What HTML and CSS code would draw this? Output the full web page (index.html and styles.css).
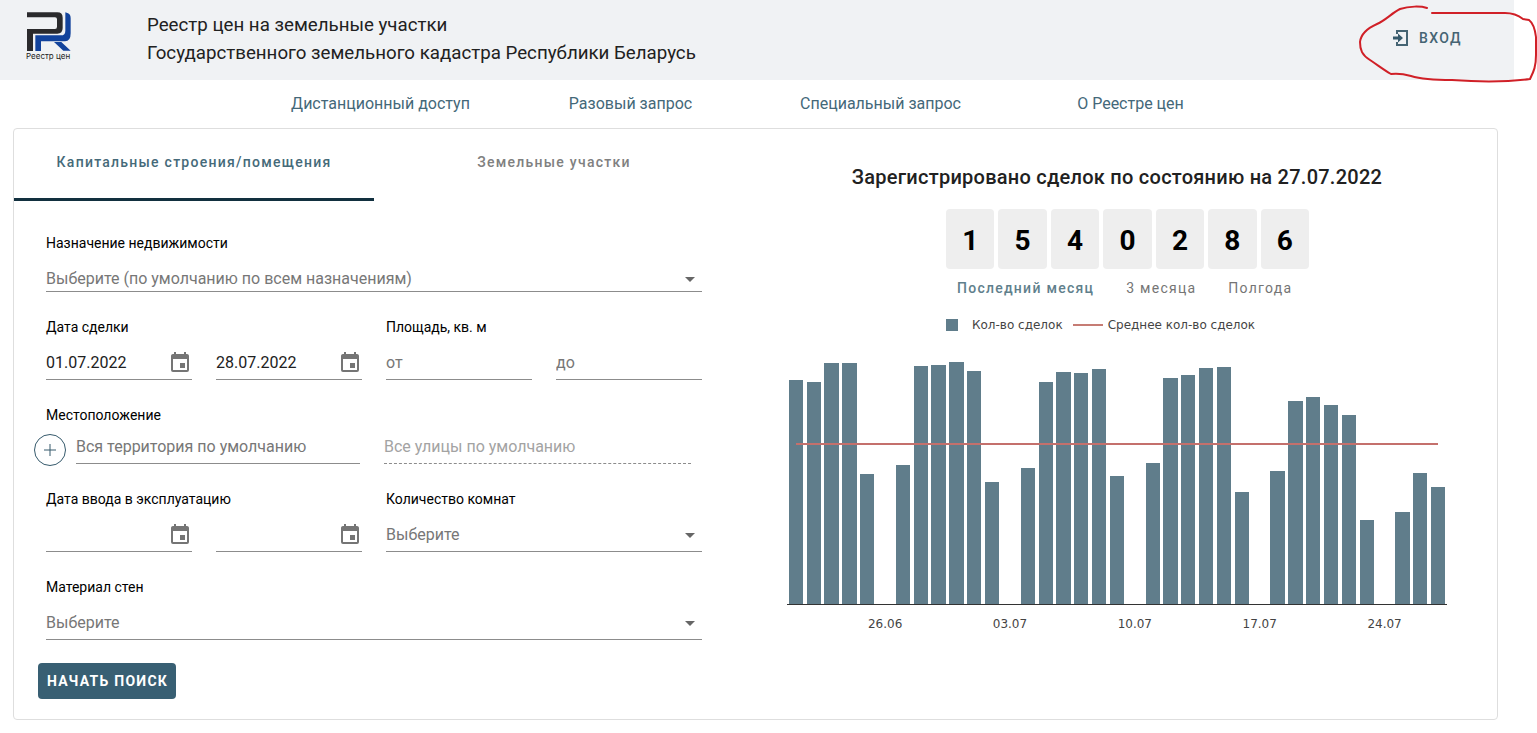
FILE: index.html
```
<!DOCTYPE html>
<html lang="ru">
<head>
<meta charset="utf-8">
<title>Реестр цен</title>
<link rel="stylesheet" href="styles.css">
</head>
<body>
<header class="header">
  <a class="logo" href="#">
    <svg class="logo-mark" viewBox="78 33 138 123" aria-hidden="true">
      <path fill="#2a2a2c" d="M81 37H172Q188 37 188 53V84Q188 101 172 101H99V153H81V87H165Q171 87 171 80V58Q171 52 165 52H81Z"/>
      <path fill="#12439c" d="M196 37L204 40Q212 43 212 55V100Q212 124 195 124H123V153H106V106H183Q196 106 196 92ZM162 126H184L212 152H190Z"/>
    </svg>
    <span class="logo-text">Реестр цен</span>
  </a>
  <h3 class="title">Реестр цен на земельные участки<br>Государственного земельного кадастра Республики Беларусь</h3>
  <button class="login" type="button">
    <svg class="login-icon" viewBox="0 0 16 18" aria-hidden="true">
      <path fill="none" stroke="#456473" stroke-width="2" d="M4 5V2H14V16H4V13"/>
      <path fill="#365a6c" d="M0 7.500H5V4.500L10 9L5 13.500V10.500H0Z"/>
    </svg>
    ВХОД
  </button>
</header>
<nav class="nav">
  <a href="#">Дистанционный доступ</a>
  <a href="#">Разовый запрос</a>
  <a href="#">Специальный запрос</a>
  <a href="#">О Реестре цен</a>
</nav>
<main class="card">
  <section class="search">
    <div class="tabs">
      <button class="tab tab-active" type="button">Капитальные строения/помещения</button>
      <button class="tab" type="button">Земельные участки</button>
    </div>
    <form class="form">
      <div class="group group-wide">
        <label class="label" for="purpose">Назначение недвижимости</label>
        <div class="field field-select field-short">
          <select id="purpose"><option>Выберите (по умолчанию по всем назначениям)</option></select>
          <svg class="arrow" viewBox="0 0 24 24" aria-hidden="true"><path d="M7 10L12 15L17 10Z"/></svg>
        </div>
      </div>
      <div class="group">
        <label class="label" for="deal-from">Дата сделки</label>
        <div class="pair">
          <div class="field">
            <input id="deal-from" type="text" value="01.07.2022">
            <button class="calendar" type="button" aria-label="Дата с"><svg viewBox="0 0 24 24"><path d="M19,19H5V8H19M16,1V3H8V1H6V3H5C3.89,3 3,3.89 3,5V19A2,2 0 0,0 5,21H19A2,2 0 0,0 21,19V5C21,3.89 20.1,3 19,3H18V1M17,12H12V17H17V12Z"/></svg></button>
          </div>
          <div class="field">
            <input type="text" value="28.07.2022" aria-label="Дата сделки по">
            <button class="calendar" type="button" aria-label="Дата по"><svg viewBox="0 0 24 24"><path d="M19,19H5V8H19M16,1V3H8V1H6V3H5C3.89,3 3,3.89 3,5V19A2,2 0 0,0 5,21H19A2,2 0 0,0 21,19V5C21,3.89 20.1,3 19,3H18V1M17,12H12V17H17V12Z"/></svg></button>
          </div>
        </div>
      </div>
      <div class="group">
        <label class="label" for="area-from">Площадь, кв. м</label>
        <div class="pair">
          <div class="field"><input id="area-from" type="text" placeholder="от"></div>
          <div class="field"><input type="text" placeholder="до" aria-label="Площадь до"></div>
        </div>
      </div>
      <div class="group group-wide group-tight">
        <label class="label" for="place">Местоположение</label>
        <div class="location">
          <button class="add" type="button" aria-label="Добавить"><svg viewBox="0 0 12 12"><path d="M6 0V12M0 6H12"/></svg></button>
          <div class="field field-place"><input id="place" type="text" placeholder="Вся территория по умолчанию"></div>
          <div class="field field-street"><input type="text" placeholder="Все улицы по умолчанию" aria-label="Улица" disabled></div>
        </div>
      </div>
      <div class="group">
        <label class="label" for="built-from">Дата ввода в эксплуатацию</label>
        <div class="pair">
          <div class="field">
            <input id="built-from" type="text">
            <button class="calendar" type="button" aria-label="Ввод с"><svg viewBox="0 0 24 24"><path d="M19,19H5V8H19M16,1V3H8V1H6V3H5C3.89,3 3,3.89 3,5V19A2,2 0 0,0 5,21H19A2,2 0 0,0 21,19V5C21,3.89 20.1,3 19,3H18V1M17,12H12V17H17V12Z"/></svg></button>
          </div>
          <div class="field">
            <input type="text" aria-label="Дата ввода по">
            <button class="calendar" type="button" aria-label="Ввод по"><svg viewBox="0 0 24 24"><path d="M19,19H5V8H19M16,1V3H8V1H6V3H5C3.89,3 3,3.89 3,5V19A2,2 0 0,0 5,21H19A2,2 0 0,0 21,19V5C21,3.89 20.1,3 19,3H18V1M17,12H12V17H17V12Z"/></svg></button>
          </div>
        </div>
      </div>
      <div class="group">
        <label class="label" for="rooms">Количество комнат</label>
        <div class="field field-select">
          <select id="rooms"><option>Выберите</option></select>
          <svg class="arrow" viewBox="0 0 24 24" aria-hidden="true"><path d="M7 10L12 15L17 10Z"/></svg>
        </div>
      </div>
      <div class="group group-wide">
        <label class="label" for="walls">Материал стен</label>
        <div class="field field-select">
          <select id="walls"><option>Выберите</option></select>
          <svg class="arrow" viewBox="0 0 24 24" aria-hidden="true"><path d="M7 10L12 15L17 10Z"/></svg>
        </div>
      </div>
      <button class="submit" type="button">НАЧАТЬ ПОИСК</button>
    </form>
  </section>
  <section class="stats">
    <h2 class="stats-title">Зарегистрировано сделок по состоянию на 27.07.2022</h2>
    <div class="summary">
      <div class="counter"><span>1</span><span>5</span><span>4</span><span>0</span><span>2</span><span>8</span><span>6</span></div>
      <div class="periods">
        <button class="period period-active" type="button">Последний месяц</button>
        <button class="period" type="button">3 месяца</button>
        <button class="period" type="button">Полгода</button>
      </div>
      <div class="legend">
        <span class="key-bar"></span><span>Кол-во сделок</span>
        <span class="key-line"></span><span>Среднее кол-во сделок</span>
      </div>
    </div>
    <div class="chart">
      <div class="plot">
        <i style="height:224px"></i><i style="height:222px"></i><i style="height:241px"></i><i style="height:241px"></i><i style="height:130px"></i><i style="height:0px"></i><i style="height:139px"></i>
        <i style="height:238px"></i><i style="height:239px"></i><i style="height:242px"></i><i style="height:233px"></i><i style="height:122px"></i><i style="height:0px"></i><i style="height:136px"></i>
        <i style="height:222px"></i><i style="height:232px"></i><i style="height:231px"></i><i style="height:235px"></i><i style="height:128px"></i><i style="height:0px"></i><i style="height:141px"></i>
        <i style="height:226px"></i><i style="height:229px"></i><i style="height:236px"></i><i style="height:237px"></i><i style="height:112px"></i><i style="height:0px"></i><i style="height:133px"></i>
        <i style="height:203px"></i><i style="height:207px"></i><i style="height:199px"></i><i style="height:189px"></i><i style="height:84px"></i><i style="height:0px"></i><i style="height:92px"></i>
        <i style="height:131px"></i><i style="height:117px"></i>
        <div class="average"></div>
      </div>
      <div class="dates"><span>26.06</span><span>03.07</span><span>10.07</span><span>17.07</span><span>24.07</span></div>
    </div>
  </section>
</main>
<svg class="marker" viewBox="1357 0 180 86" aria-hidden="true">
  <path d="M1427 8C1421 6 1409 6 1400 9C1392 13 1386 20 1377 24C1368 28 1361 33 1360 42C1360 50 1362 55 1370 60C1379 66 1384 70 1391 74C1398 73 1404 74 1411 76C1424 80 1440 80 1452 80C1480 82 1507 82 1530 79C1534 71 1536 66 1536 55V37C1535 29 1533 23 1529 20L1523 19C1518 15 1512 13 1505 13H1432"/>
</svg>
</body>
</html>
```

FILE: styles.css
```
* { box-sizing: border-box; }

body {
  margin: 0;
  padding-right: 23px;
  background: #fff;
  color: #212121;
  font: 16px/24px Roboto, "Noto Sans", sans-serif;
  position: relative;
  overflow-x: hidden;
}

button, input, select { font: inherit; color: inherit; margin: 0; }
button { padding: 0; border: 0; background: none; cursor: pointer; }
a { color: inherit; text-decoration: none; }

.header {
  display: flex;
  align-items: flex-start;
  min-height: 80px;
  padding: 11px 52px 0 26px;
  background: #f0f2f4;
}
.logo { display: flex; flex-direction: column; width: 46px; margin-right: 75px; }
.logo-mark { width: 46px; height: 41px; }
.logo-text { font: 8px/8px Inter, sans-serif; color: #222; white-space: nowrap; }
.title { flex: 1; margin: 0; line-height: 28px; font-weight: 400; }
.login {
  display: flex;
  align-items: center;
  gap: 10px;
  margin-top: 17px;
  font-size: 14px;
  line-height: 20px;
  font-weight: 500;
  letter-spacing: 0.1em;
  color: #456473;
}
.login-icon { width: 16px; height: 18px; }

.nav {
  display: grid;
  grid-template-columns: repeat(4, 250px);
  justify-content: center;
  padding: 12px 3px 12px 0;
  text-align: center;
  color: #446879;
}

.card {
  display: grid;
  grid-template-columns: minmax(0, 720fr) minmax(0, 763fr);
  margin: 0 16px 0 13px;
  border: 1px solid #dedede;
  border-radius: 4px;
}

.tabs { display: grid; grid-template-columns: 1fr 1fr; height: 72px; }
.tab {
  padding-bottom: 3px;
  border-bottom: 3px solid transparent;
  font-size: 14px;
  font-weight: 500;
  letter-spacing: 0.09em;
  color: #808080;
}
.tab-active { border-color: #12303f; color: #456a79; }

.form {
  display: grid;
  grid-template-columns: 1fr 1fr;
  gap: 25px 24px;
  padding: 32px 32px 20px;
}
.group { display: flex; flex-direction: column; gap: 10px; min-width: 0; }
.group-wide { grid-column: 1 / -1; }
.group-tight { gap: 6px; }
.label { font-size: 14px; line-height: 20px; color: #000; }
.pair { display: grid; grid-template-columns: 1fr 1fr; gap: 24px; }
.field {
  display: flex;
  align-items: center;
  height: 33px;
  min-width: 0;
  border-bottom: 1px solid #8c8c8c;
}
.field input, .field select {
  flex: 1;
  width: 100%;
  min-width: 0;
  height: 24px;
  padding: 0;
  border: 0;
  background: none;
  outline: 0;
}
.field input::placeholder { color: #777; opacity: 1; }
.field-select { display: grid; align-items: center; }
.field-short { align-items: end; height: 27px; margin-top: 2px; }
.field select { grid-area: 1 / 1; appearance: none; color: #777; }
.arrow { grid-area: 1 / 1; justify-self: end; width: 24px; height: 24px; fill: #666; pointer-events: none; }
.calendar { width: 24px; height: 24px; }
.calendar svg { display: block; fill: #757575; }
.location { display: flex; align-items: flex-start; padding-right: 11px; }
.add {
  display: grid;
  place-items: center;
  width: 32px;
  height: 32px;
  margin: 3px 10px -2px -12px;
  border: 1px solid #365a6c;
  border-radius: 50%;
}
.add svg { width: 12px; height: 12px; fill: none; stroke: #365a6c; }
.field-place { flex: 284; margin-right: 24px; }
.field-street { flex: 307; border-bottom-style: dashed; }
.field-street input::placeholder { color: #a3a3a3; }
.submit {
  justify-self: start;
  height: 36px;
  margin: -2px 0 0 -8px;
  padding: 0 8px 0 9px;
  border-radius: 4px;
  background: #385f73;
  color: #fff;
  font-size: 14px;
  font-weight: 700;
  letter-spacing: 0.09em;
}

.stats { display: flex; flex-direction: column; align-items: center; padding: 36px 50px 0 53px; }
.stats-title { margin: 0 0 20px; font-size: 20px; line-height: 24px; font-weight: 500; letter-spacing: 0.0125em; }
.summary { width: 363px; margin-left: 21px; }
.counter { display: grid; grid-template-columns: repeat(7, 1fr); gap: 4px; }
.counter span {
  padding-top: 4px;
  border-radius: 4px;
  background: #eee;
  color: #000;
  font: 700 28px/56px Roboto, sans-serif;
  text-align: center;
}
.periods { display: flex; gap: 32px; padding: 9px 11px 18px; }
.period { font-size: 14px; line-height: 20px; letter-spacing: 0.09em; color: #757575; white-space: nowrap; }
.period-active { font-weight: 500; color: #5f7f8c; }
.legend {
  display: flex;
  align-items: center;
  font: 12px/18px "DejaVu Sans", sans-serif;
  color: #444;
  white-space: nowrap;
}
.key-bar { width: 12px; height: 12px; margin-right: 14px; background: #607d8b; }
.key-line { width: 30px; height: 2px; margin: 0 5px 0 10px; background: #c67c74; }

.chart { align-self: stretch; margin-top: 26px; }
.plot {
  position: relative;
  display: grid;
  grid-template-columns: repeat(37, 1fr);
  align-items: end;
  height: 245px;
  border-bottom: 1px solid #333;
}
.plot i { margin: 0 10%; background: #607d8b; }
.average { position: absolute; left: 9px; right: 9px; bottom: 159px; height: 2px; background: #c4706c; }
.dates {
  display: grid;
  grid-template-columns: 2fr repeat(5, 7fr);
  margin-top: 10px;
  font: 12px/18px "DejaVu Sans", sans-serif;
  color: #444;
  text-align: center;
}
.dates span:first-child { grid-column: 2; }

.marker {
  position: absolute;
  top: 0;
  right: 0;
  width: 180px;
  height: 86px;
  fill: none;
  stroke: #d02027;
  stroke-width: 2;
  stroke-linecap: round;
  pointer-events: none;
}
```
